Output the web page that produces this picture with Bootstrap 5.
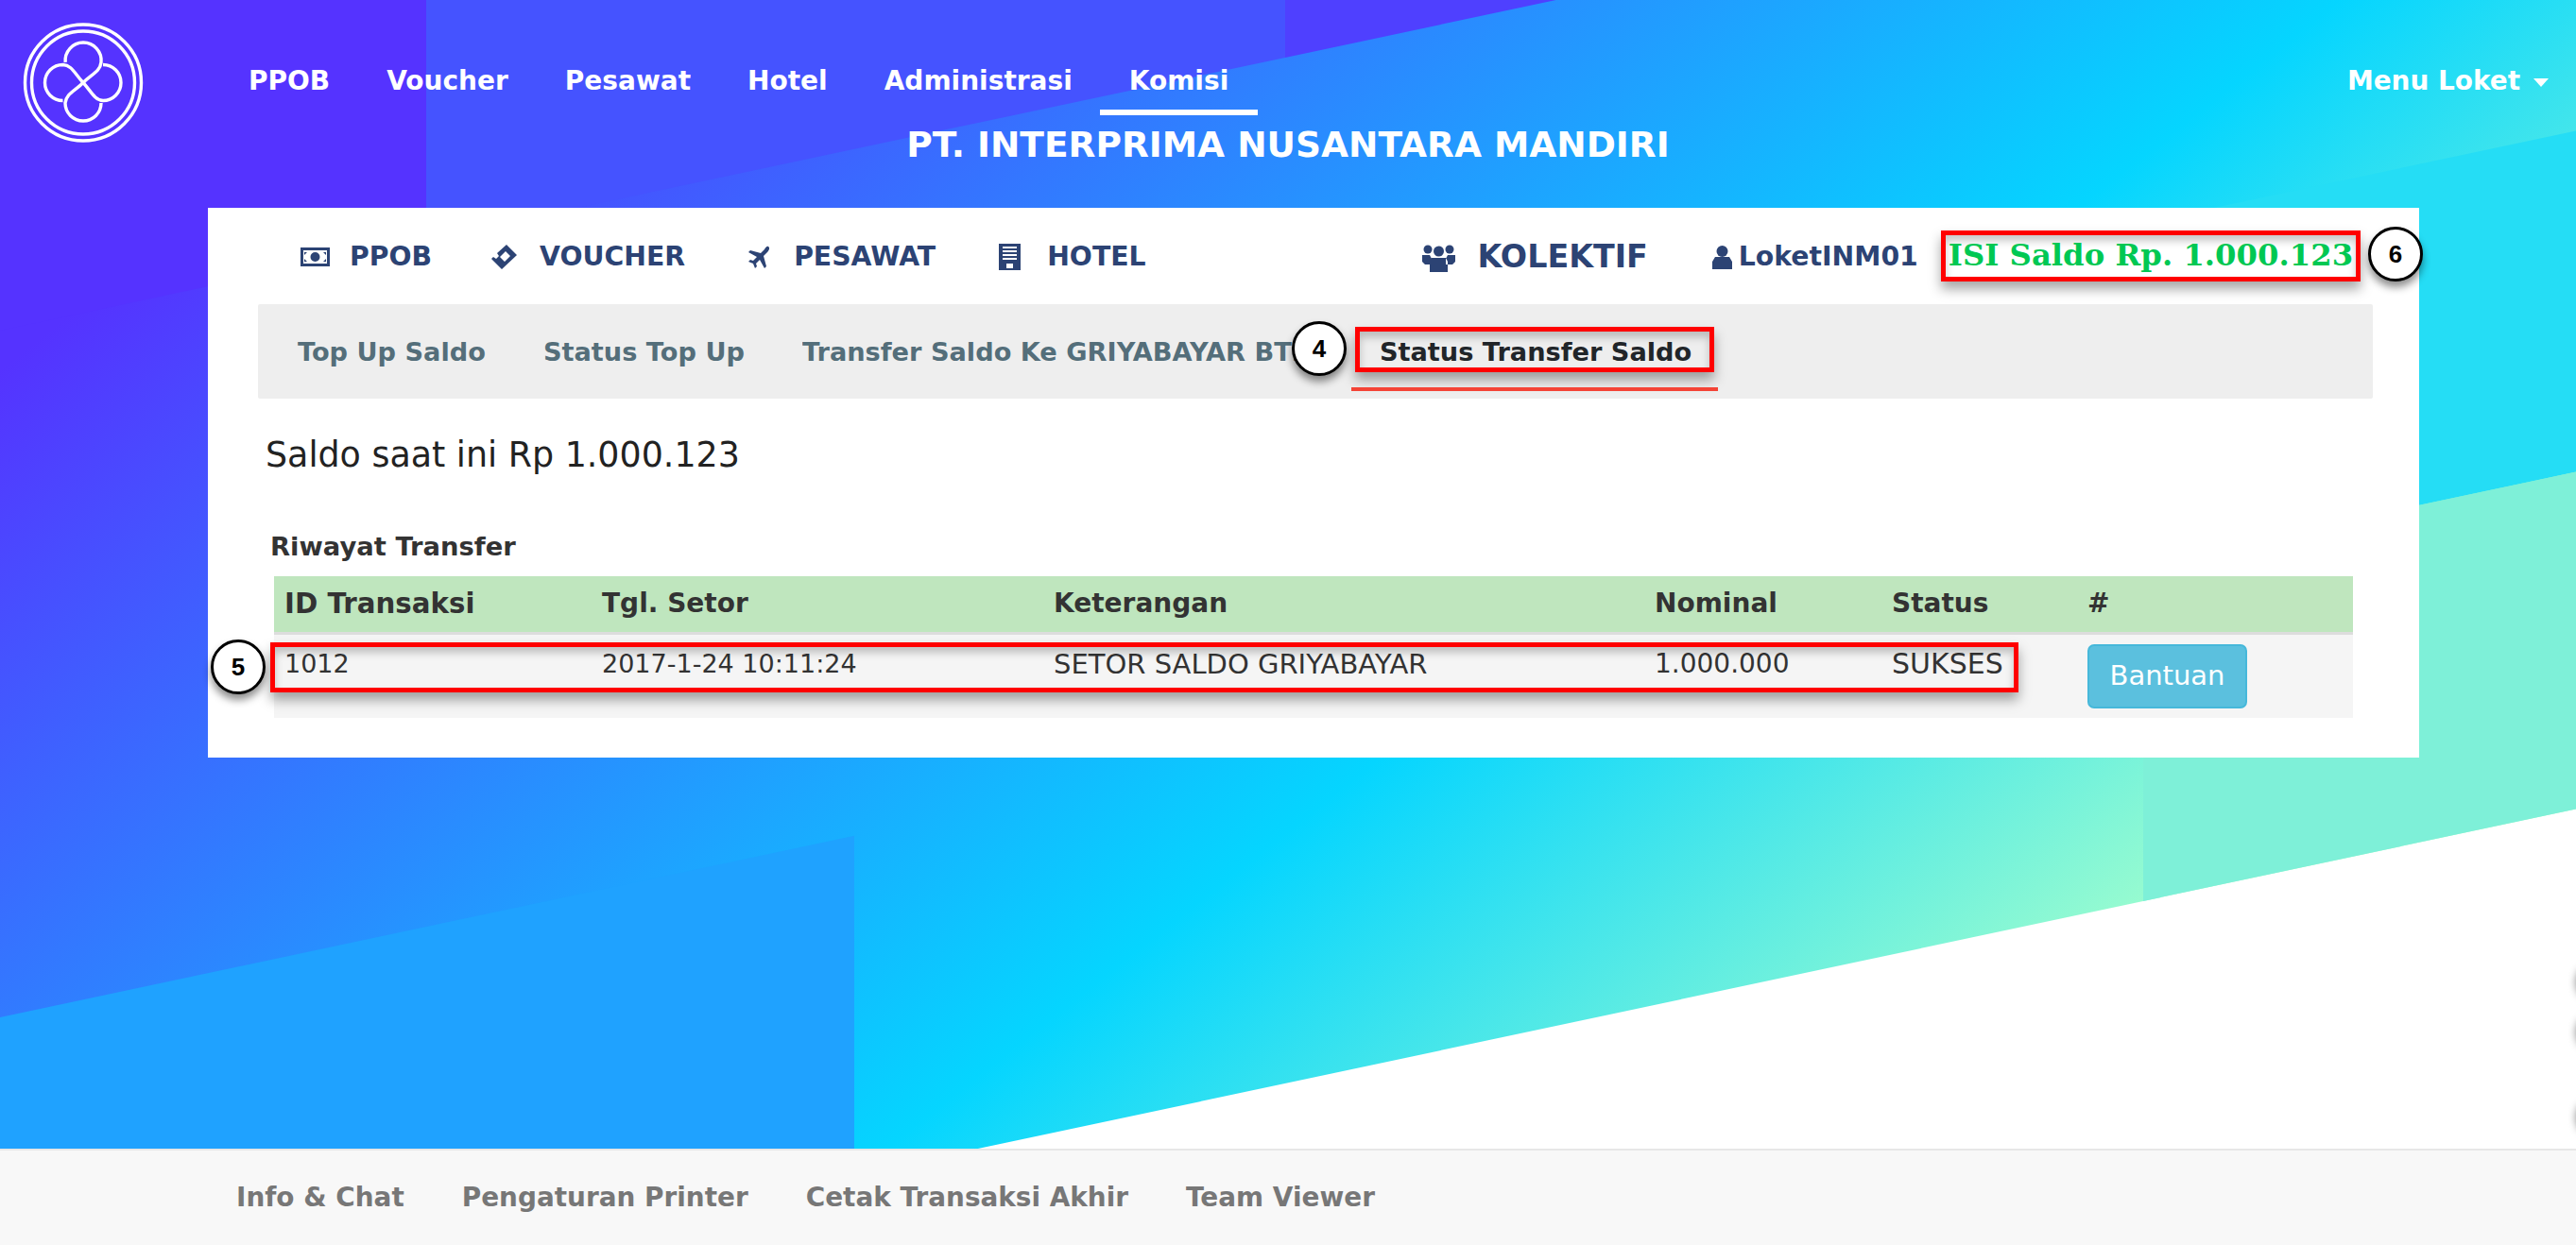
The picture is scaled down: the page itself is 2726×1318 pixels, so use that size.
<!DOCTYPE html>
<html lang="en">
<head>
  <meta charset="UTF-8">
  <title>Griyabayar | Status Transfer Saldo</title>
  <meta name="viewport" content="width=device-width, initial-scale=1">
  <link href="https://cdn.jsdelivr.net/npm/bootstrap@5.3.0/dist/css/bootstrap.min.css" rel="stylesheet" />
  <style>
    html, body { height: 100%; }
    body {
      width: 2726px;
      height: 1318px;
      overflow: hidden;
      position: relative;
      background: #fff;
      font-family: "DejaVu Sans", Verdana, sans-serif;
      color: #333;
    }
    /* skewed stripe background */
    .latar { position: absolute; left: 0; top: 0; width: 2726px; height: 1318px; overflow: hidden; }
    .stripes {
      position: absolute;
      left: 0;
      top: 0;
      width: 2726px;
      height: 1436px;
      transform: skewY(-12deg);
      transform-origin: 0 0;
      background: linear-gradient(150deg, #53f 13%, #05d5ff 65%, #a6ffcb 94%);
    }
    .stripes span { position: absolute; display: block; }
    .st-a { left: 0; top: 0; width: 451px; height: 350px; background: #53f; }
    .st-b { left: 451px; top: 0; width: 909px; height: 350px; background: #4553ff; }
    .st-c { left: 1360px; top: 0; width: 500px; height: 350px; background: #4f40ff; }
    .st-d { left: 2268px; top: 718px; width: 458px; height: 361px; background: #25ddf5; }
    .st-e { left: 2268px; top: 1079px; width: 458px; height: 357px; background: #7ef0d8; }
    .st-f { left: 0; top: 1077px; width: 904px; height: 359px; background: #1fa2ff; }
    .tepi-bulat { position: absolute; left: 2726px; width: 40px; height: 40px; border-radius: 50%; box-shadow: 0 0 9px rgba(0,0,0,.45); }
    .tepi-1 { top: 1020px; }
    .tepi-2 { top: 1073px; }
    .tepi-3 { top: 1163px; }

    .page-wrap { position: relative; height: 1318px; display: flex; flex-direction: column; }
    .main-area { flex: 1 1 auto; }

    .top-bar { height: 128px; padding: 24px 0 0 24px; display: flex; align-items: flex-start; }
    .top-logo { width: 128px; height: 128px; flex: none; }
    .top-menu { gap: 60px; margin-left: 111px; margin-top: 38px; }
    .top-menu a { color: #fff; font-weight: 700; font-size: 28px; line-height: 48px; text-decoration: none; position: relative; display: block; }
    .top-menu a.aktif::after { content: ""; position: absolute; left: -31px; right: -31px; top: 54px; height: 6px; background: #fff; }
    .loket-menu { margin-left: auto; margin-top: 38px; margin-right: 29px; color: #fff; font-weight: 700; font-size: 27.9px; line-height: 48px; }
    .loket-caret { display: inline-block; border-top: 9px solid #fff; border-left: 8px solid transparent; border-right: 8px solid transparent; margin-left: 14px; vertical-align: 3px; }

    .judul { text-align: center; color: #fff; font-weight: 700; font-size: 37.5px; line-height: 50px; margin: 0; height: 92px; }

    .panel-utama { position: relative; background: #fff; margin: 0 166px 0 220px; height: 582px; padding: 0 49px 0 53px; }
    .tab-produk { height: 102px; padding-top: 2px; display: flex; align-items: center; color: #2c4374; font-weight: 700; font-size: 28.3px; }
    .tab-produk svg { flex: none; fill: #2c4374; }
    .tab-item { display: flex; align-items: center; }
    .tab-kolektif { font-size: 33.3px; }
    .sub-menu { height: 100px; padding-top: 2px; background: #eee; border-radius: 2px; gap: 61px; padding-left: 42px; align-items: center; }
    .sub-menu a { color: #546e7a; font-weight: 700; font-size: 27.2px; text-decoration: none; white-space: nowrap; line-height: 48px; }
    .sub-menu a.aktif { color: #212529; }
    .sub-potong { width: 550px; overflow: hidden; }
    .saldo-text { font-size: 36.4px; margin: 37px 0 0 8px; line-height: 46px; color: #222; }
    .riwayat { font-weight: 700; font-size: 27.4px; margin: 52px 0 9px 13px; line-height: 44px; color: #333; }
    .tabel-wrap { margin: 0 17px; }
    .tabel-transfer { table-layout: fixed; width: 2200px; margin: 0; }
    .tabel-transfer th, .tabel-transfer td { padding: 10px 11px; font-size: 28px; color: #333; vertical-align: top; border: 0; background: transparent; box-shadow: none; white-space: nowrap; }
    .tabel-transfer thead tr { background: #bfe6be; }
    .tabel-transfer thead th { height: 60px; line-height: 38px; border-bottom: 3px solid #ddd; }
    .tabel-transfer thead th:first-child { font-size: 29.3px; }
    .tabel-transfer tbody tr { background: #f5f5f5; }
    .tabel-transfer tbody td { height: 89px; line-height: 42px; }
    .tabel-transfer tbody td:nth-child(1), .tabel-transfer tbody td:nth-child(2) { font-size: 27px; }
    .tabel-transfer tbody td:nth-child(3) { font-size: 29px; }
    .tabel-transfer tbody td:nth-child(5) { font-size: 30px; }
    .tombol-bantuan { background: #5bc0de; border: 2px solid #46b8da; color: #fff; border-radius: 7px; font-size: 29px; width: 169px; height: 68px; padding: 0; }

    /* annotations over the screenshot */
    .tanda-merah { position: absolute; border: 5px solid #f00; box-shadow: 0 8px 12px rgba(0,0,0,.35), inset 0 6px 8px rgba(0,0,0,.22); pointer-events: none; }
    .tanda-isi { left: 1834px; top: 24px; width: 444px; height: 54px; color: #00c853; font-family: "DejaVu Serif", serif; font-weight: 700; font-size: 32.3px; line-height: 42px; text-align: center; white-space: nowrap; }
    .tanda-status { left: 1214px; top: 126px; width: 380px; height: 48px; }
    .tanda-baris { left: 66px; top: 460px; width: 1850px; height: 53px; }
    .garis-aktif { position: absolute; left: 1210px; top: 190px; width: 388px; height: 4px; background: #f44336; }
    .nomor { position: absolute; width: 58px; height: 58px; border-radius: 50%; background: #fff; border: 3px solid #000; box-shadow: 0 6px 8px rgba(0,0,0,.45); font-weight: 700; font-size: 26px; color: #000; display: flex; align-items: center; justify-content: center; font-family: "Liberation Sans", sans-serif; }
    .nomor-4 { left: 1147px; top: 120px; }
    .nomor-5 { left: 3px; top: 457px; }
    .nomor-6 { left: 2286px; top: 20px; }

    .kaki { flex: none; height: 102px; background: #f8f8f8; border-top: 2px solid #e7e7e7; padding-left: 250px; gap: 61px; align-items: center; }
    .kaki a { color: #777; font-weight: 700; font-size: 27.9px; text-decoration: none; }
  </style>
</head>
<body>
<div class="latar">
  <div class="stripes">
    <span class="st-a"></span><span class="st-b"></span><span class="st-c"></span>
    <span class="st-d"></span><span class="st-e"></span><span class="st-f"></span>
  </div>
  <div class="tepi-bulat tepi-1"></div>
  <div class="tepi-bulat tepi-2"></div>
  <div class="tepi-bulat tepi-3"></div>
</div>

<div class="page-wrap">
  <div class="main-area">
    <!-- TOP NAV -->
    <div class="top-bar">
      <svg class="top-logo" viewBox="0 0 128 128" fill="none" stroke="#fff" stroke-width="3.4">
        <circle cx="64" cy="63.5" r="61.5"/>
        <circle cx="64" cy="63.5" r="54.5"/>
        <path d="M45.2 42A19 19 0 1 1 83 42C82 52 72 55 64 63.500C56 72 46 75 45 85A19 19 0 1 0 83 85"/>
        <path d="M42.500 82.500A19 19 0 1 1 42.500 44.500C52 45 55 54 64 63.500C72 72 76 82 85 82.500A19 19 0 1 0 85 44.500"/>
      </svg>
      <nav class="d-flex top-menu">
        <a href="#">PPOB</a>
        <a href="#">Voucher</a>
        <a href="#">Pesawat</a>
        <a href="#">Hotel</a>
        <a href="#">Administrasi</a>
        <a href="#" class="aktif">Komisi</a>
      </nav>
      <div class="loket-menu">Menu Loket<span class="loket-caret"></span></div>
    </div>
    <h1 class="judul">PT. INTERPRIMA NUSANTARA MANDIRI</h1>

    <!-- PANEL -->
    <div class="panel-utama">
      <div class="tab-produk">
        <div class="tab-item" style="margin-left:45px">
          <svg width="31" height="20" viewBox="0 0 31 20"><path fill-rule="evenodd" d="M0 0h31v20H0zM3 3v14h25V3zM15.500 5a5 5 0 1 1 0 10a5 5 0 0 1 0-10zM7 5L4 8V5zM24 5h3v3zM4 12l3 3H4zM27 12v3h-3z"/></svg>
          <span style="margin-left:21px">PPOB</span>
        </div>
        <div class="tab-item" style="margin-left:63px">
          <svg width="27" height="26" viewBox="0 0 27 26"><path fill-rule="evenodd" d="M16 0l11 11l-16 15L0 15l2-2l3 2l3-3l-2-3zM15 7L9 13l5 5l6-6z"/></svg>
          <span style="margin-left:24px">VOUCHER</span>
        </div>
        <div class="tab-item" style="margin-left:66px">
          <svg width="24" height="24" viewBox="0 0 24 24"><path d="M22 1c2 1 1 4-1 6l-4 4l3 11l-2 2l-5-9l-4 4l1 3l-2 2l-2-5l-5-2l2-2l3 1l4-4L1 7l2-2l11 3l4-4c1-2 3-4 4-3z"/></svg>
          <span style="margin-left:25px">PESAWAT</span>
        </div>
        <div class="tab-item" style="margin-left:67px">
          <svg width="23" height="28" viewBox="0 0 23 28"><path fill-rule="evenodd" d="M0 0h23v28H0zM4 3v2h15V3zM4 7v2h15V7zM4 11v2h15v-2zM4 15v2h15v-2zM8 21v5h7v-5z"/></svg>
          <span style="margin-left:28px">HOTEL</span>
        </div>
        <div class="tab-item tab-kolektif" style="margin-left:292px">
          <svg width="35" height="31" viewBox="0 0 35 31"><circle cx="6" cy="7" r="4.500"/><circle cx="29" cy="7" r="4.500"/><circle cx="17.500" cy="9" r="5.500"/><path d="M0 13h8l2 4v6H3l-3-3zM35 13h-8l-2 4v6h7l3-3zM10 16h15l2 4v11H8V20z"/></svg>
          <span style="margin-left:24px">KOLEKTIF</span>
        </div>
        <div class="tab-item" style="margin-left:68px">
          <svg width="21" height="25" viewBox="0 0 21 25"><circle cx="10.500" cy="6" r="6"/><path d="M3 12h15l3 5v8H0v-8z"/></svg>
          <span style="margin-left:7px">LoketINM01</span>
        </div>
      </div>
      <div class="d-flex sub-menu">
        <a href="#">Top Up Saldo</a>
        <a href="#">Status Top Up</a>
        <div class="sub-potong"><a href="#">Transfer Saldo Ke GRIYABAYAR BTN</a></div>
        <a href="#" class="aktif">Status Transfer Saldo</a>
      </div>
      <p class="saldo-text">Saldo saat ini Rp 1.000.123</p>
      <div class="riwayat">Riwayat Transfer</div>
      <div class="tabel-wrap">
        <table class="table tabel-transfer">
          <colgroup>
            <col style="width:336px"><col style="width:478px"><col style="width:636px"><col style="width:251px"><col style="width:207px"><col style="width:292px">
          </colgroup>
          <thead>
            <tr><th>ID Transaksi</th><th>Tgl. Setor</th><th>Keterangan</th><th>Nominal</th><th>Status</th><th>#</th></tr>
          </thead>
          <tbody>
            <tr>
              <td>1012</td>
              <td>2017-1-24 10:11:24</td>
              <td>SETOR SALDO GRIYABAYAR</td>
              <td>1.000.000</td>
              <td>SUKSES</td>
              <td><button class="btn tombol-bantuan" type="button">Bantuan</button></td>
            </tr>
          </tbody>
        </table>
      </div>

      <div class="tanda-merah tanda-isi">ISI Saldo Rp. 1.000.123</div>
      <div class="tanda-merah tanda-status"></div>
      <div class="garis-aktif"></div>
      <div class="tanda-merah tanda-baris"></div>
      <div class="nomor nomor-4">4</div>
      <div class="nomor nomor-5">5</div>
      <div class="nomor nomor-6">6</div>
    </div>
  </div>

  <!-- FOOTER -->
  <div class="d-flex kaki">
    <a href="#">Info &amp; Chat</a>
    <a href="#">Pengaturan Printer</a>
    <a href="#">Cetak Transaksi Akhir</a>
    <a href="#">Team Viewer</a>
  </div>
</div>

<script src="https://cdn.jsdelivr.net/npm/bootstrap@5.3.0/dist/js/bootstrap.bundle.min.js"></script>
</body>
</html>
